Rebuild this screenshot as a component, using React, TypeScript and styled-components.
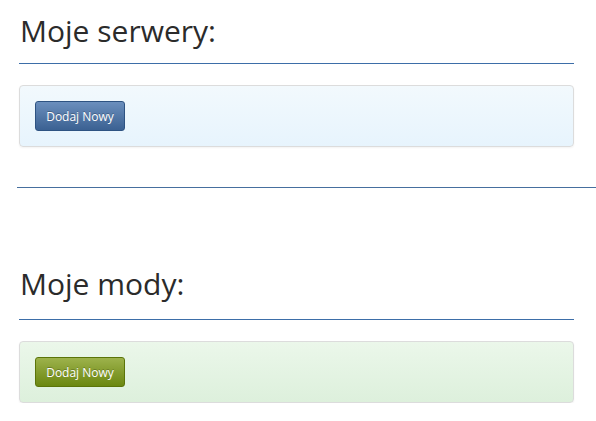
import React from 'react'
import styled, { createGlobalStyle } from 'styled-components'

const GlobalStyle = createGlobalStyle`
  body {
    margin: 0;
    background: #fff;
    font-family: 'Open Sans', 'Noto Sans', sans-serif;
    color: #333;
  }
  #root {
    overflow: hidden;
  }
`

type Tone = 'blue' | 'green'

const tones = {
  blue: {
    panelTop: '#f2f9fd',
    panelBottom: '#e7f4fd',
    btnTop: '#6b8fbd',
    btnBottom: '#3b6192',
    btnBorder: '#2e5382',
  },
  green: {
    panelTop: '#ebf7ea',
    panelBottom: '#ddf0dc',
    btnTop: '#9db24c',
    btnBottom: '#6b8710',
    btnBorder: '#5b7409',
  },
}

const Page = styled.div`
  padding: 0 22px 0 19px;
`

const Section = styled.section<{ $top: number }>`
  padding-top: ${(p) => p.$top}px;
`

const Heading = styled.h2<{ $height: number }>`
  margin: 0;
  padding: 0 0 0 1px;
  font-size: 30px;
  line-height: 40px;
  font-weight: 400;
  color: #2b2b2b;
  border-bottom: 1px solid #3d6ea8;
  height: ${(p) => p.$height}px;
`

const Panel = styled.div<{ $tone: Tone }>`
  margin-top: 21px;
  padding: 15px;
  border: 1px solid #dcdcdc;
  border-radius: 4px;
  background: linear-gradient(
    to bottom,
    ${(p) => tones[p.$tone].panelTop},
    ${(p) => tones[p.$tone].panelBottom}
  );
  box-shadow: 0 1px 2px rgba(0, 0, 0, 0.05);
`

const Button = styled.button<{ $tone: Tone }>`
  display: block;
  width: 90px;
  height: 30px;
  padding: 0;
  border: 1px solid ${(p) => tones[p.$tone].btnBorder};
  border-radius: 3px;
  background: linear-gradient(
    to bottom,
    ${(p) => tones[p.$tone].btnTop},
    ${(p) => tones[p.$tone].btnBottom}
  );
  color: #fff;
  font-family: 'Open Sans', 'Noto Sans', sans-serif;
  font-size: 12px;
  text-shadow: 0 -1px 0 rgba(0, 0, 0, 0.25);
  cursor: pointer;
`

const Divider = styled.hr`
  margin: 40px -30px 0 -2px;
  border: 0;
  border-top: 1px solid #466f9e;
`

export default function App() {
  return (
    <Page>
      <GlobalStyle />
      <Section $top={11}>
        <Heading $height={52}>Moje serwery:</Heading>
        <Panel $tone='blue'>
          <Button $tone='blue'>Dodaj Nowy</Button>
        </Panel>
      </Section>
      <Divider />
      <Section $top={76}>
        <Heading $height={55}>Moje mody:</Heading>
        <Panel $tone='green'>
          <Button $tone='green'>Dodaj Nowy</Button>
        </Panel>
      </Section>
    </Page>
  )
}
